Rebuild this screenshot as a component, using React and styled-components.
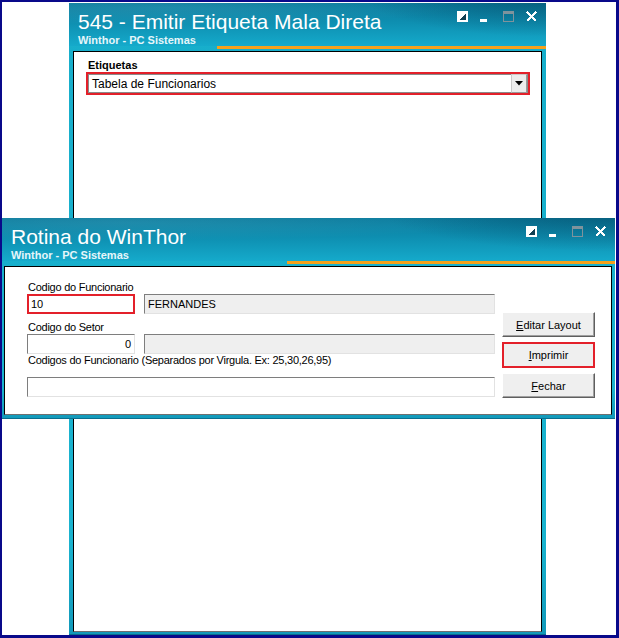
import React from "react"
import styled, { createGlobalStyle } from "styled-components"

const GlobalStyle = createGlobalStyle`
  html, body {
    margin: 0;
    padding: 0;
    background: #fff;
  }
  body {
    font-family: "Liberation Sans", Arial, sans-serif;
  }
  * {
    box-sizing: border-box;
  }
`

function WinControls() {
    return (
        <Controls>
            <Ctl viewBox="0 0 11 11">
                <rect x="0" y="0" width="11" height="11" fill="#fff" />
                <polygon points="2,9 9,2 9,9" fill="#123f52" />
            </Ctl>
            <Ctl viewBox="0 0 11 11">
                <rect x="0" y="8" width="7" height="3" fill="#fff" />
            </Ctl>
            <Ctl viewBox="0 0 11 11">
                <rect x="0.5" y="0.5" width="10" height="10" fill="none" stroke="#7f939c" />
                <rect x="0" y="0" width="11" height="3" fill="#7f939c" />
            </Ctl>
            <Ctl viewBox="0 0 11 11">
                <path d="M1 1 L10 10 M10 1 L1 10" stroke="#fff" strokeWidth="2.2" />
            </Ctl>
        </Controls>
    )
}

function Window({ x, y, w, h, title, rule, clientMargin, children }) {
    return (
        <Win $x={x} $y={y} $w={w} $h={h}>
            <TitleBar>
                <TitleRow>
                    <Title>{title}</Title>
                    <WinControls />
                </TitleRow>
                <Subtitle>Winthor - PC Sistemas</Subtitle>
            </TitleBar>
            <OrangeRule $offset={rule} />
            <Client $m={clientMargin}>{children}</Client>
        </Win>
    )
}

function App() {
    return (
        <>
            <GlobalStyle />
            <Screen>
                <Window x={67} y={1} w={477} h={632} title="545 - Emitir Etiqueta Mala Direta" rule={148} clientMargin="2px 4px 3px 4px">
                    <BackBody>
                        <BoldLabel>Etiquetas</BoldLabel>
                        <Combo $highlight>
                            <ComboText>Tabela de Funcionarios</ComboText>
                            <DropBtn>
                                <svg width="8" height="5" viewBox="0 0 8 5">
                                    <polygon points="0,0 8,0 4,4.5" fill="#000" />
                                </svg>
                            </DropBtn>
                        </Combo>
                    </BackBody>
                </Window>

                <Window x={0} y={216} w={613} h={201} title="Rotina do WinThor" rule={285} clientMargin="2px 3px 4px 2px">
                    <FrontBody>
                        <FormCol>
                            <Label>Codigo do Funcionario</Label>
                            <FieldRow>
                                <Field $w={108} $highlight>10</Field>
                                <Field $w={351} $disabled>FERNANDES</Field>
                            </FieldRow>
                            <Label $top={7}>Codigo do Setor</Label>
                            <FieldRow>
                                <Field $w={108} $align="flex-end">0</Field>
                                <Field $w={351} $disabled />
                            </FieldRow>
                            <Label>Codigos do Funcionario (Separados por Virgula. Ex: 25,30,26,95)</Label>
                            <FieldRow $top={10}>
                                <Field $w={468} />
                            </FieldRow>
                        </FormCol>
                        <ButtonCol>
                            <Button><u>E</u>ditar Layout</Button>
                            <Button $highlight><u>I</u>mprimir</Button>
                            <Button><u>F</u>echar</Button>
                        </ButtonCol>
                    </FrontBody>
                </Window>
            </Screen>
        </>
    )
}

const Screen = styled.div`
    position: relative;
    width: 619px;
    height: 638px;
    border-style: solid;
    border-color: #09098a;
    border-width: 2px 3px 3px 2px;
    background: #fff;
    overflow: hidden;
`

const Win = styled.div`
    position: absolute;
    left: ${(p) => p.$x}px;
    top: ${(p) => p.$y}px;
    width: ${(p) => p.$w}px;
    height: ${(p) => p.$h}px;
    display: flex;
    flex-direction: column;
    background: linear-gradient(180deg, #17aecb 0%, #1ab3cf 85%, #1299ba 100%);
    box-shadow: inset 0 -1px 0 #0b6f8e;
`

const TitleBar = styled.div`
    height: 43px;
    flex-shrink: 0;
    padding: 6px 9px 0 9px;
    display: flex;
    flex-direction: column;
    color: #fff;
    background:
        radial-gradient(ellipse 55% 140% at 100% -20%, rgba(4, 64, 92, 0.55), rgba(4, 64, 92, 0) 70%),
        radial-gradient(ellipse 90% 60% at 20% 10%, rgba(255, 255, 255, 0.08), rgba(255, 255, 255, 0) 70%),
        linear-gradient(180deg, #0b7c9e 0%, #0e8fb1 45%, #15aacb 100%);
`

const TitleRow = styled.div`
    display: flex;
    justify-content: space-between;
    align-items: flex-start;
`

const Title = styled.div`
    font-size: 21px;
    line-height: 25px;
    white-space: nowrap;
`

const Subtitle = styled.div`
    font-size: 11px;
    font-weight: bold;
    line-height: 12px;
    color: #e6f6fa;
    white-space: nowrap;
`

const Controls = styled.div`
    display: flex;
    gap: 12px;
    margin-top: 2px;
`

const Ctl = styled.svg.attrs({ width: 11, height: 11, shapeRendering: "crispEdges" })`
    display: block;
`

const OrangeRule = styled.div`
    height: 3px;
    flex-shrink: 0;
    margin-left: ${(p) => p.$offset}px;
    background: #f5a11b;
`

const Client = styled.div`
    flex: 1;
    margin: ${(p) => p.$m};
    background: #fff;
    border: 1px solid #000;
    border-bottom-color: #6f6f6f;
`

const BackBody = styled.div`
    padding: 7px 11px 0 12px;
`

const BoldLabel = styled.div`
    font-size: 11px;
    font-weight: bold;
    line-height: 13px;
    margin-left: 2px;
    color: #000;
`

const Combo = styled.div`
    width: 444px;
    height: 23px;
    display: flex;
    align-items: center;
    border: 2px solid ${(p) => (p.$highlight ? "#e3202a" : "#7a7a7a")};
    box-shadow: inset 0 0 0 1px #8a8a8a;
    background: #fff;
    padding: 1px;
`

const ComboText = styled.div`
    flex: 1;
    font-size: 12px;
    padding-left: 3px;
    color: #000;
`

const DropBtn = styled.div`
    width: 16px;
    height: 19px;
    display: flex;
    align-items: center;
    justify-content: center;
    background: #ececec;
    border: 1px solid #c9c9c9;
    border-right-color: #9a9a9a;
    border-bottom-color: #9a9a9a;
`

const FrontBody = styled.div`
    display: flex;
    padding: 14px 0 0 22px;
`

const FormCol = styled.div`
    width: 468px;
    display: flex;
    flex-direction: column;
`

const Label = styled.div`
    font-size: 11px;
    line-height: 13px;
    letter-spacing: -0.25px;
    margin-top: ${(p) => p.$top || 0}px;
    margin-left: 1px;
    color: #000;
    white-space: nowrap;
`

const FieldRow = styled.div`
    display: flex;
    gap: 9px;
    margin-top: ${(p) => p.$top || 0}px;
`

const Field = styled.div`
    width: ${(p) => p.$w}px;
    height: 20px;
    display: flex;
    align-items: center;
    justify-content: ${(p) => p.$align || "flex-start"};
    padding: 0 3px;
    font-size: 11px;
    color: #000;
    background: ${(p) => (p.$disabled ? "#efefef" : "#fff")};
    border: 1px solid;
    border-color: #7e7e7e #e2e2e2 #e2e2e2 #7e7e7e;
    ${(p) => p.$highlight && `
        border: 2px solid #e3202a;
        padding: 0 2px;
    `}
`

const ButtonCol = styled.div`
    display: flex;
    flex-direction: column;
    gap: 5px;
    margin-left: 7px;
    padding-top: 31px;
`

const Button = styled.div`
    width: 93px;
    height: ${(p) => (p.$highlight ? 26 : 25)}px;
    display: flex;
    align-items: center;
    justify-content: center;
    font-size: 11px;
    color: #000;
    background: #efefef;
    border: 1px solid;
    border-color: #fff #5f5f5f #5f5f5f #fff;
    box-shadow: inset -1px -1px 0 #a0a0a0;
    ${(p) => p.$highlight && `
        border: 2px solid #e3202a;
        box-shadow: none;
    `}
    u {
        text-decoration: underline;
    }
`

export default App
